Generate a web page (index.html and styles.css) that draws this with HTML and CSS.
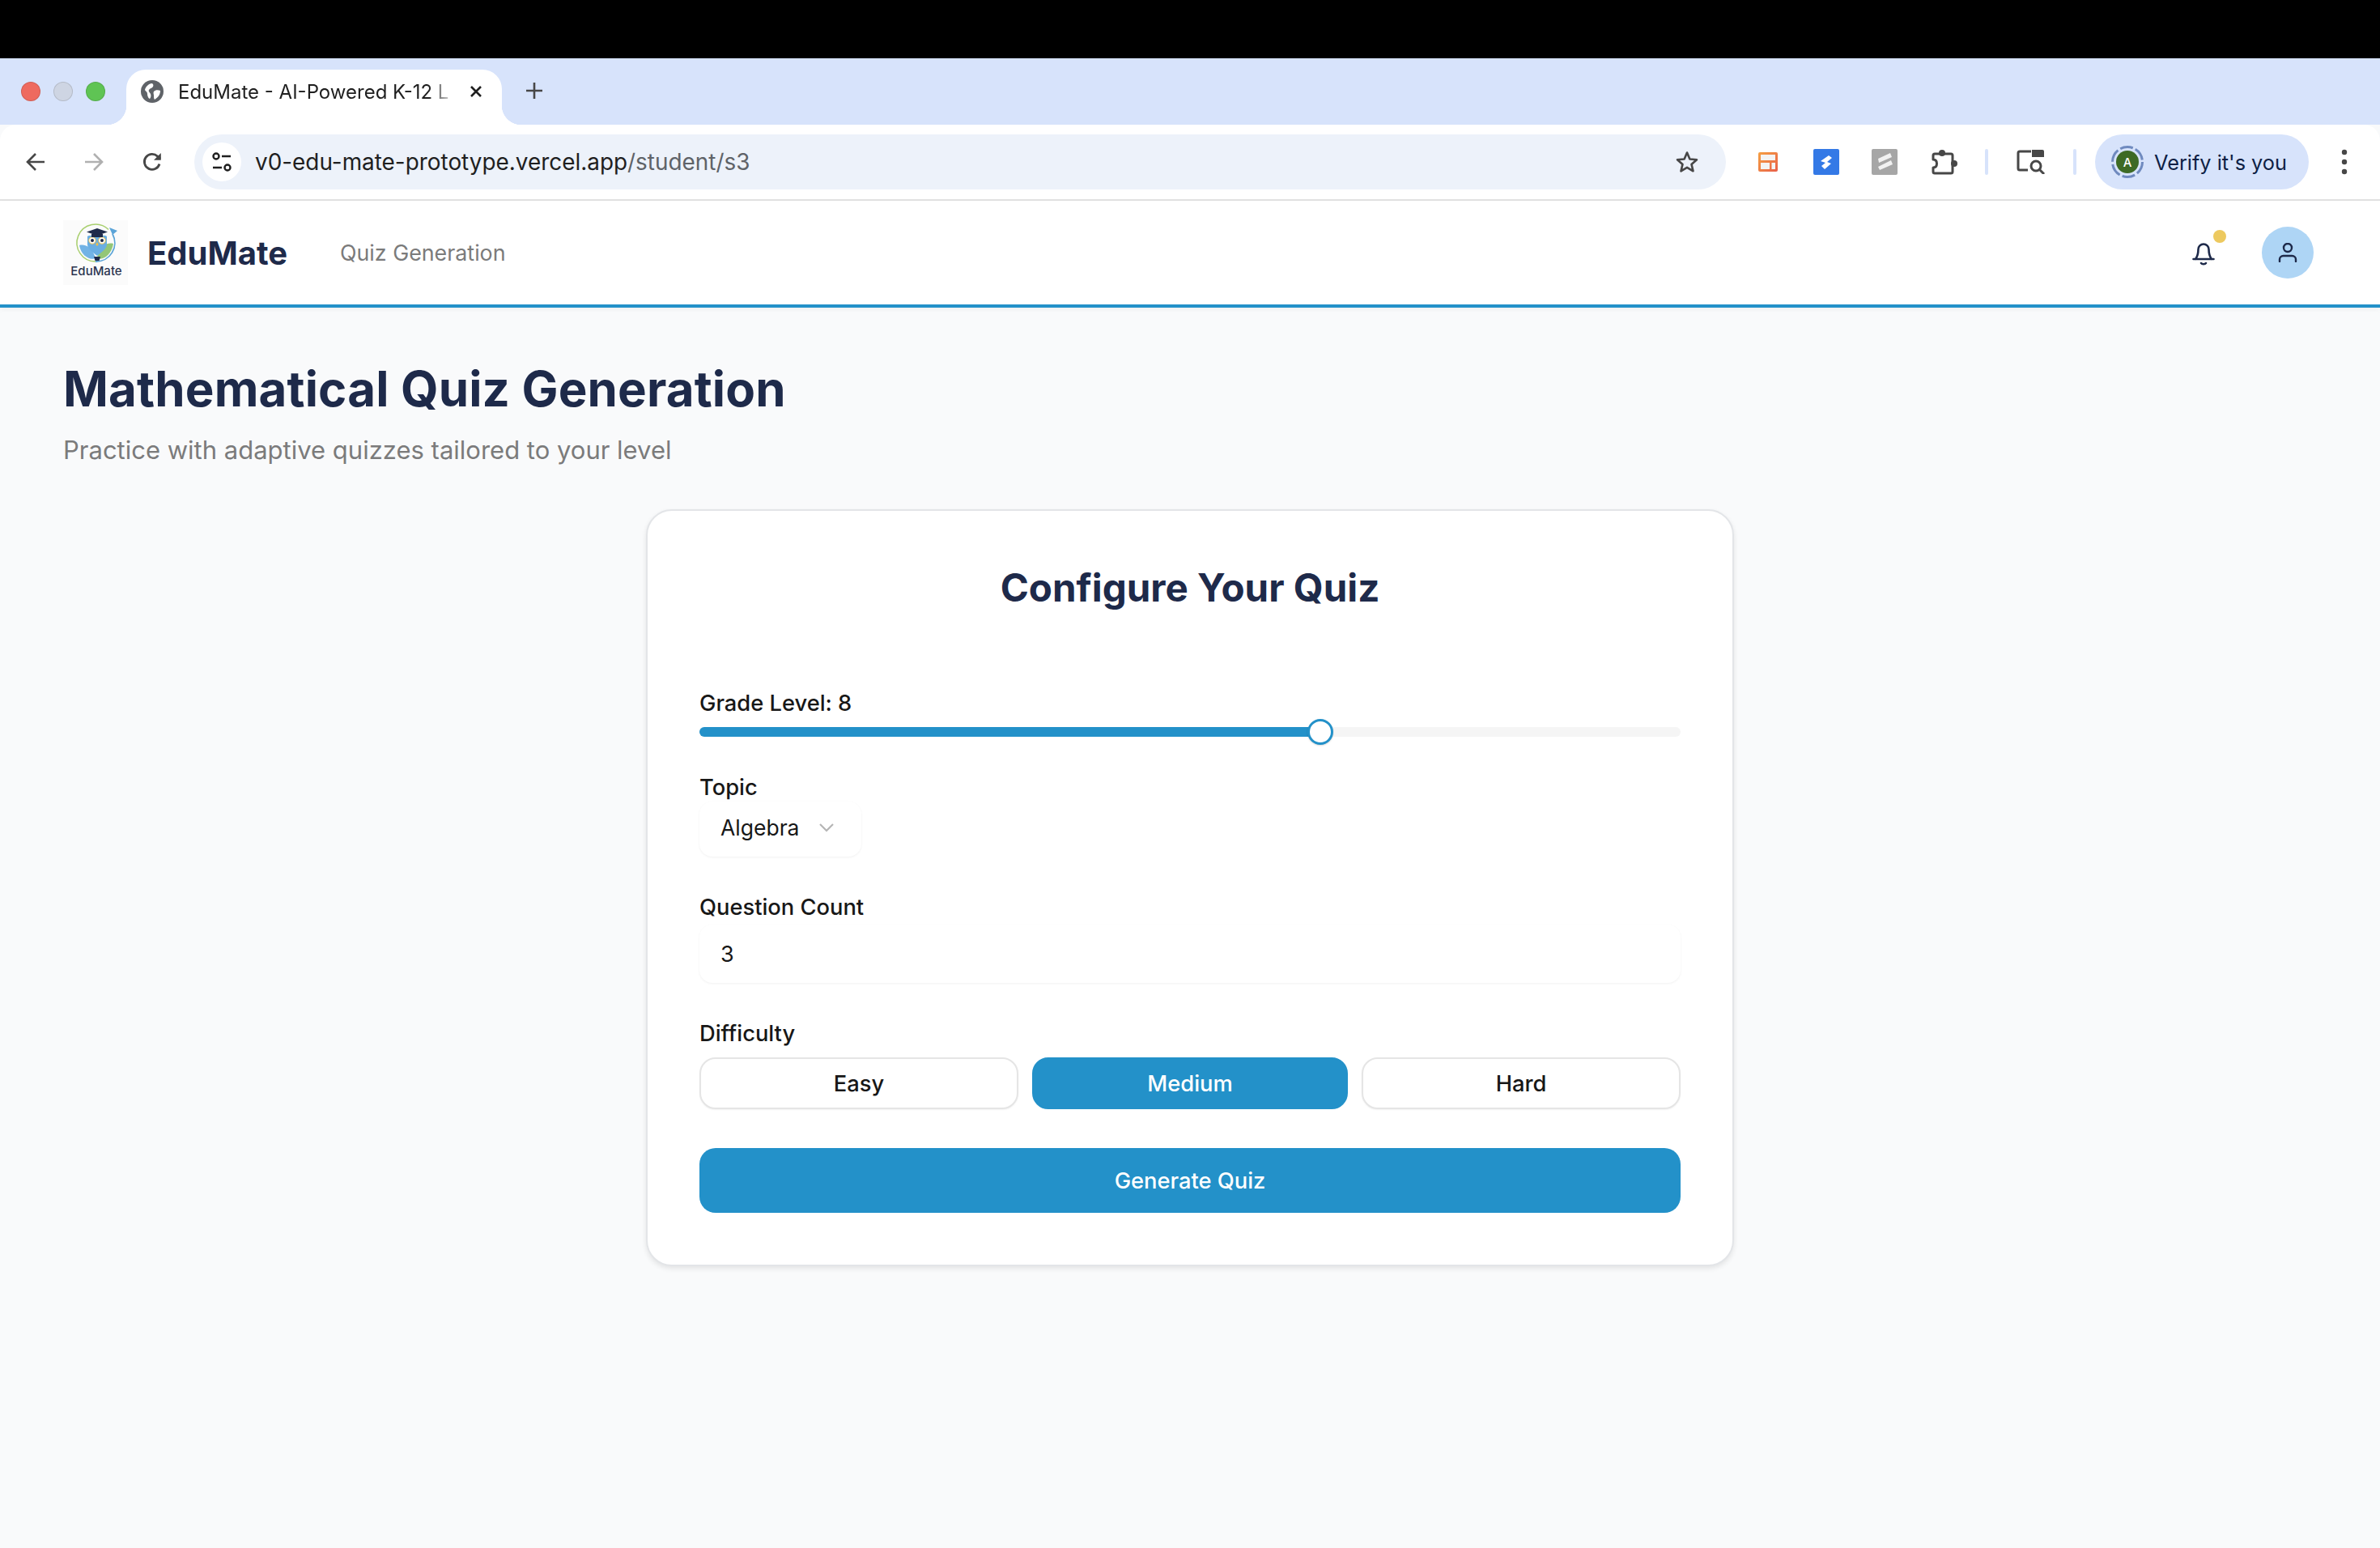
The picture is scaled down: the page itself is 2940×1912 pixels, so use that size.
FILE: index.html
```html
<!DOCTYPE html>
<html lang="en">
<head>
<meta charset="utf-8">
<title>EduMate - AI-Powered K-12 Learning</title>
<link rel="stylesheet" href="styles.css">
</head>
<body>
<div class="topbar"></div>
<div class="tabstrip">
  <div class="lights"><span class="light red"></span><span class="light grey"></span><span class="light green"></span></div>
  <div class="tab">
    <svg class="favicon" viewBox="0 0 28 28"><circle cx="14" cy="14" r="14" fill="#5f6368"/><path d="M5 12c1-4 4-7 8-8 2 0 3 2 2 4-1 2-4 2-5 4s1 3 2 5 0 5-1 6c-1 0-3-3-3-6s-2-3-3-5zM16 14c2-2 5-2 8-1 0 4-2 8-7 11-1-1-1-3-1-5s-1-3 0-5z" fill="#fff"/></svg>
    <span class="tab-title">EduMate - AI-Powered K-12 L</span>
    <svg class="tab-close" viewBox="0 0 16 16"><path d="M2 2l12 12M14 2L2 14" stroke="#1f1f1f" stroke-width="2.600" fill="none"/></svg>
  </div>
  <svg class="newtab" viewBox="0 0 20 20"><path d="M10 0v20M0 10h20" stroke="#474747" stroke-width="2.600" fill="none"/></svg>
</div>
<div class="toolbar">
  <div class="navs">
    <svg class="nav" viewBox="0 0 24 24"><path d="M23 12H2M12 2L2 12l10 10" stroke="#474747" stroke-width="2.600" fill="none"/></svg>
    <svg class="nav" viewBox="0 0 24 24"><path d="M1 12h21M12 2l10 10-10 10" stroke="#b0b0b0" stroke-width="2.600" fill="none"/></svg>
    <svg class="nav" viewBox="0 0 24 24"><path d="M21 14.500A9.500 9.500 0 1 1 18.500 5L22 8" stroke="#474747" stroke-width="2.800" fill="none"/><path d="M22.800 1v8.800H14" fill="#474747"/></svg>
  </div>
  <div class="omnibox">
    <span class="tune"><svg viewBox="0 0 24 24" class="tune-svg"><circle cx="5" cy="5" r="3.500" fill="none" stroke="#1f1f1f" stroke-width="2.400"/><path d="M12 5h11M1 19h11" stroke="#1f1f1f" stroke-width="2.400"/><circle cx="19" cy="19" r="3.500" fill="none" stroke="#1f1f1f" stroke-width="2.400"/></svg></span>
    <span class="url">v0-edu-mate-prototype.vercel.app<span class="url-path">/student/s3</span></span>
    <svg class="star" viewBox="0 0 28 28"><path d="M14 2.500l3.400 8 8.600.7-6.500 5.700 2 8.400L14 20.800l-7.500 4.500 2-8.400L2 11.200l8.600-.7z" fill="none" stroke="#474747" stroke-width="2.600" stroke-linejoin="round"/></svg>
  </div>
  <div class="exts">
    <svg class="ext-orange" viewBox="0 0 24 24"><defs><linearGradient id="og" x1="0" y1="0" x2="1" y2="1"><stop offset="0" stop-color="#f5a043"/><stop offset="1" stop-color="#e8604a"/></linearGradient></defs><rect width="24" height="24" rx="2" fill="url(#og)"/><path d="M3 3h18v7H3zM3 13h11v8H3zM16.500 13H21v8h-4.500z" fill="#f4f4f4"/></svg>
    <svg class="ext-blue" viewBox="0 0 32 32"><rect width="32" height="32" rx="2" fill="#3479e6"/><path d="M9 15L19 8l4 3-6 5 5 2-8 7-4-4 5-4z" fill="#fff"/></svg>
    <svg class="ext-grey" viewBox="0 0 32 32"><rect width="32" height="32" rx="2" fill="#a6a6a6"/><path d="M8 12l15-7 2 5-16 7zM8 22l16-8 2 5-16 7z" fill="#f1f1f1"/></svg>
    <svg class="ext-puzzle" viewBox="0 0 32 32"><path d="M4 6h20a2 2 0 0 1 2 2v20a2 2 0 0 1-2 2H4a2 2 0 0 1-2-2v-5c3 0 4.500-2 4.500-5S5 13 2 13V8a2 2 0 0 1 2-2z" fill="none" stroke="#474747" stroke-width="3" stroke-linejoin="round"/><circle cx="13" cy="5" r="4" fill="#474747"/><circle cx="28" cy="18" r="4" fill="#474747"/></svg>
    <span class="sep"></span>
    <svg class="ext-lens" viewBox="0 0 36 30"><path d="M18 2H4a2 2 0 0 0-2 2v19a2 2 0 0 0 2 2h10" fill="none" stroke="#474747" stroke-width="3"/><path d="M19 0h13a2 2 0 0 1 2 2v7H19z" fill="#474747"/><circle cx="24" cy="20" r="6" fill="none" stroke="#474747" stroke-width="3"/><path d="M28 24l6 6" stroke="#474747" stroke-width="3"/></svg>
    <span class="sep"></span>
  </div>
  <div class="verify">
    <span class="ring"><svg viewBox="0 0 40 40" class="ring-svg"><circle cx="20" cy="20" r="18.500" fill="none" stroke="#6f8abf" stroke-width="3" stroke-dasharray="16 3.370"/><circle cx="20" cy="20" r="14" fill="#3d6a25"/></svg><span class="ring-letter">A</span></span>
    <span class="verify-text">Verify it's you</span>
  </div>
  <svg class="kebab" viewBox="0 0 8 32"><circle cx="4" cy="4" r="3.200" fill="#474747"/><circle cx="4" cy="16" r="3.200" fill="#474747"/><circle cx="4" cy="28" r="3.200" fill="#474747"/></svg>
</div>
<header class="app-header">
  <div class="logo">
    <svg viewBox="0 0 80 80" class="logo-svg">
      <rect width="80" height="80" fill="#fbfbfb"/>
      <path d="M56 11.500A23 23 0 1 0 40 51" fill="none" stroke="#a9cf6f" stroke-width="1.500"/>
      <path d="M40 51A23 23 0 0 0 61 17" fill="none" stroke="#5ba4d8" stroke-width="1.800"/>
      <path d="M57 9l10 4-6 5z" fill="#5ba4d8"/>
      <path d="M20 31c7-2 16 2 20 16-8 3-18-4-20-16z" fill="#72b3e5"/>
      <path d="M62 29c-7-2-18 2-20 18 8 3 18-5 20-18z" fill="#93c678"/>
      <path d="M30 20c0-2 24-2 24 0v10c0 5-6 9-12 14-6-5-12-9-12-14z" fill="#6aaee2"/>
      <circle cx="36" cy="25" r="4.200" fill="#fff" stroke="#eebe4a" stroke-width="1"/><circle cx="48" cy="25" r="4.200" fill="#fff" stroke="#eebe4a" stroke-width="1"/>
      <circle cx="36" cy="25" r="2" fill="#1f2a4a"/><circle cx="48" cy="25" r="2" fill="#1f2a4a"/>
      <path d="M42 27l1.800 3-1.800 2-1.800-2z" fill="#eebe4a"/>
      <path d="M29 14.500l13-4.500 13 4.500-13 4.500z" fill="#1f2a4a"/>
      <path d="M35 17h14v4H35z" fill="#1f2a4a"/>
      <path d="M38 45h8l-1.500 5h-5z" fill="#1f2a4a"/>
      <text x="41" y="68" text-anchor="middle" class="logo-text">EduMate</text>
    </svg>
  </div>
  <span class="brand">EduMate</span>
  <nav class="crumb">Quiz Generation</nav>
  <div class="header-right">
    <span class="bell-wrap">
      <svg class="bell" viewBox="0 0 28 32"><path d="M1.500 24h25M4 24c2.500-3 3.500-7 3.500-12a6.500 6.500 0 0 1 13 0c0 5 1 9 3.500 12" fill="none" stroke="#1e2a4a" stroke-width="2.600" stroke-linejoin="round" stroke-linecap="round"/><path d="M11 29c1.200 1.600 4.800 1.600 6 0" fill="none" stroke="#1e2a4a" stroke-width="2.600" stroke-linecap="round"/></svg>
      <span class="dot"></span>
    </span>
    <span class="user"><svg viewBox="0 0 24 24" class="user-svg"><circle cx="12" cy="6" r="5" fill="none" stroke="#1e2a4a" stroke-width="2.400"/><path d="M2 23v-2.500a4.500 4.500 0 0 1 4.500-4.500h11a4.500 4.500 0 0 1 4.500 4.500V23" fill="none" stroke="#1e2a4a" stroke-width="2.400" stroke-linecap="round"/></svg></span>
  </div>
</header>
<main class="main">
  <h1 class="title">Mathematical Quiz Generation</h1>
  <p class="subtitle">Practice with adaptive quizzes tailored to your level</p>
  <section class="card">
    <h2 class="card-title">Configure Your Quiz</h2>
    <div class="label first">Grade Level: 8</div>
    <div class="track"><div class="fill"><span class="thumb"></span></div></div>
    <div class="label topic">Topic</div>
    <div class="select"><span>Algebra</span><svg class="chev" viewBox="0 0 20 12"><path d="M2 2l8 8 8-8" fill="none" stroke="#b5b5b5" stroke-width="2.200"/></svg></div>
    <div class="label question">Question Count</div>
    <div class="input">3</div>
    <div class="label difficulty">Difficulty</div>
    <div class="diffs">
      <button class="diff">Easy</button>
      <button class="diff active">Medium</button>
      <button class="diff">Hard</button>
    </div>
    <button class="generate">Generate Quiz</button>
  </section>
</main>
</body>
</html>
```
FILE: styles.css
```css
* { box-sizing: border-box; }
html, body { margin: 0; padding: 0; }
body {
  width: 2940px;
  height: 1912px;
  overflow: hidden;
  display: flex;
  flex-direction: column;
  font-family: Inter, "Liberation Sans", sans-serif;
  background: #f9fafb;
  color: #171717;
}
.topbar { height: 72px; background: #000; flex: none; }
.tabstrip {
  height: 82px;
  flex: none;
  background: #d7e3fb;
  display: flex;
  align-items: flex-start;
}
.lights { display: flex; gap: 16px; padding: 29px 0 0 26px; width: 156px; }
.light { width: 24px; height: 24px; border-radius: 50%; border: 1px solid rgba(0,0,0,.12); }
.light.red { background: #ee6a5f; }
.light.grey { background: #ced5e3; }
.light.green { background: #5fc454; }
.tab {
  position: relative;
  margin-top: 14px;
  width: 464px;
  height: 68px;
  background: #fff;
  border-radius: 24px 24px 0 0;
  display: flex;
  align-items: center;
  padding: 0 24px 14px 18px;
}
.tab::before, .tab::after {
  content: "";
  position: absolute;
  bottom: 0;
  width: 24px;
  height: 24px;
}
.tab::before { left: -24px; background: radial-gradient(circle at 0 0, transparent 24px, #fff 24.500px); }
.tab::after { right: -24px; background: radial-gradient(circle at 100% 0, transparent 24px, #fff 24.500px); }
.favicon { width: 28px; height: 28px; flex: none; }
.tab-title {
  margin-left: 18px;
  width: 336px;
  flex: none;
  white-space: nowrap;
  font-size: 24px;
  color: #1f1f1f;
  -webkit-mask-image: linear-gradient(90deg, #000 92%, rgba(0,0,0,.2) 100%);
  mask-image: linear-gradient(90deg, #000 92%, rgba(0,0,0,.2) 100%);
}
.tab-close { width: 16px; height: 16px; margin-left: 24px; flex: none; }
.newtab { width: 20px; height: 20px; margin: 30px 0 0 30px; }
.toolbar {
  position: relative;
  height: 94px;
  flex: none;
  background: #fff;
  border-bottom: 2px solid #e2e2e2;
  border-radius: 20px 20px 0 0;
  display: flex;
  align-items: center;
}
.navs { display: flex; gap: 48px; padding-left: 32px; width: 240px; flex: none; }
.nav { width: 24px; height: 24px; flex: none; }
.omnibox {
  width: 1892px;
  height: 68px;
  background: #edf2fa;
  border-radius: 34px;
  display: flex;
  align-items: center;
  padding: 0 34px 0 10px;
  flex: none;
}
.tune {
  width: 48px; height: 48px;
  border-radius: 50%;
  background: #fff;
  display: flex; align-items: center; justify-content: center;
  flex: none;
}
.tune-svg { width: 24px; height: 24px; }
.url { margin-left: 17px; font-size: 27.900px; color: #1f1f1f; flex: 1; white-space: nowrap; }
.url-path { color: #5f6368; }
.star { width: 28px; height: 28px; flex: none; }
.exts { display: flex; align-items: center; flex: none; width: 456px; }
.ext-orange { width: 24px; height: 24px; margin-left: 40px; }
.ext-blue { width: 32px; height: 32px; margin-left: 44px; }
.ext-grey { width: 32px; height: 32px; margin-left: 40px; }
.ext-puzzle { width: 32px; height: 32px; margin-left: 42px; }
.sep { width: 4px; height: 32px; background: #d7e3fb; border-radius: 2px; margin-left: 34px; }
.ext-lens { width: 36px; height: 30px; margin-left: 35px; }
.verify {
  position: absolute;
  left: 2588px;
  top: 12px;
  width: 264px;
  height: 68px;
  background: #d7e3fb;
  border-radius: 34px;
  display: flex;
  align-items: center;
  padding-left: 20px;
}
.ring { position: relative; width: 40px; height: 40px; flex: none; display: flex; align-items: center; justify-content: center; }
.ring-svg { position: absolute; inset: 0; width: 40px; height: 40px; }
.ring-letter { position: relative; color: #fff; font-size: 15px; font-weight: 500; }
.verify-text { margin-left: 13px; font-size: 25.300px; color: #0e1f45; white-space: nowrap; }
.kebab { position: absolute; left: 2892px; top: 30px; width: 8px; height: 32px; }
.app-header {
  height: 132px;
  flex: none;
  background: #fff;
  border-bottom: 4px solid #2391c9;
  box-shadow: 0 2px 6px rgba(0,0,0,.05);
  display: flex;
  align-items: center;
  padding: 0 82px 0 78px;
  position: relative;
}
.logo { width: 80px; height: 80px; flex: none; }
.logo-svg { width: 80px; height: 80px; display: block; }
.logo-text { font-family: Inter, sans-serif; font-size: 15px; font-weight: 500; fill: #2c3550; }
.brand { margin-left: 24px; font-size: 40px; font-weight: 700; color: #1e2a4a; }
.crumb { margin-left: 65px; font-size: 26.800px; color: #7b7b7b; }
.header-right { margin-left: auto; display: flex; align-items: center; gap: 58px; }
.bell-wrap { position: relative; width: 28px; height: 32px; display: block; }
.bell { width: 28px; height: 32px; display: block; }
.dot { position: absolute; left: 26px; top: -12px; width: 16px; height: 16px; border-radius: 50%; background: #edc95f; }
.user {
  width: 64px; height: 64px; border-radius: 50%;
  background: #aed5f5;
  display: flex; align-items: center; justify-content: center;
}
.user-svg { width: 24px; height: 24px; }
.main { flex: 1; padding: 64px 78px 0; background: #f9fafb; }
.title { margin: 0; font-size: 60px; line-height: 72px; font-weight: 700; letter-spacing: .15px; color: #1e2a4a; }
.subtitle { margin: 20px 0 0; font-size: 31px; line-height: 40px; color: #7b7b7b; }
.card {
  width: 1344px;
  height: 935px;
  margin: 53px 0 0 720px;
  background: #fff;
  border: 2px solid #e3e5e8;
  border-radius: 32px;
  box-shadow: 0 3px 6px rgba(0,0,0,.09);
  padding: 65px 64px 0;
}
.card-title { margin: 0; text-align: center; font-size: 47.500px; line-height: 60px; font-weight: 700; color: #1e2a4a; }
.label { height: 36px; font-size: 27.300px; line-height: 38px; font-weight: 500; color: #171717; }
.label.first { margin-top: 94px; }
.track { height: 12px; margin-top: 12px; border-radius: 6px; background: #f5f5f5; }
.fill { position: relative; width: 767px; height: 12px; border-radius: 6px; background: #2391c9; }
.thumb {
  position: absolute;
  right: -16px;
  top: -10px;
  width: 32px; height: 32px;
  border-radius: 50%;
  border: 3px solid #2391c9;
  background: #fff;
  box-shadow: 0 1px 2px rgba(0,0,0,.15);
}
.label.topic, .label.question, .label.difficulty { margin-top: 44px; }
.select {
  width: 200px; height: 68px;
  border-radius: 16px;
  background: #fff;
  box-shadow: 0 1px 3px rgba(0,0,0,.06);
  display: flex; align-items: center;
  padding: 0 26px 4px;
  font-size: 26.500px;
  color: #171717;
}
.chev { width: 20px; height: 12px; margin-left: 23px; flex: none; }
.input {
  height: 72px;
  margin-top: 4px;
  border-radius: 16px;
  background: #fff;
  box-shadow: 0 1px 3px rgba(0,0,0,.06);
  display: flex; align-items: center;
  padding: 0 26px;
  font-size: 27px;
  color: #171717;
}
.diffs { display: grid; grid-template-columns: 394px 390px 394px; gap: 17px; margin-top: 12px; }
.diff {
  height: 64px;
  padding: 1px 0 0;
  font: 500 27.300px Inter, "Liberation Sans", sans-serif;
  color: #171717;
  background: #fff;
  border: 2px solid #e5e5e5;
  border-radius: 20px;
  box-shadow: 0 1px 2px rgba(0,0,0,.05);
}
.diff.active { background: #2391c9; border-color: #2391c9; color: #fff; box-shadow: none; }
.generate {
  display: block;
  width: 100%;
  height: 80px;
  margin-top: 48px;
  font: 500 27.300px Inter, "Liberation Sans", sans-serif;
  color: #fff;
  background: #2391c9;
  border: 0;
  border-radius: 20px;
}
```
